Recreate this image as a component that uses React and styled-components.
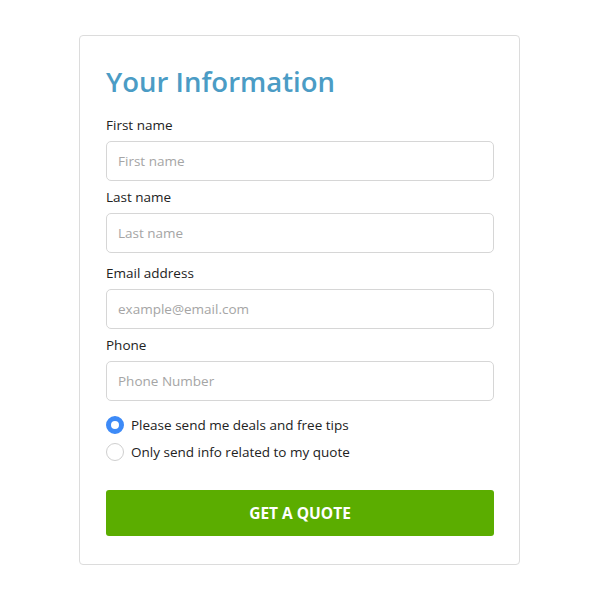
import React from 'react';
import styled, { createGlobalStyle } from 'styled-components';

const GlobalStyle = createGlobalStyle`
  body {
    margin: 0;
    background: #fff;
    font-family: "Open Sans", "Noto Sans", sans-serif;
  }
`;

const Page = styled.div`
  width: 600px;
  height: 600px;
  padding: 35px 0 0 79px;
  box-sizing: border-box;
  display: flex;
`;

const Card = styled.form`
  width: 441px;
  height: 530px;
  box-sizing: border-box;
  border: 1px solid #dcdcdc;
  border-radius: 4px;
  padding: 28px 25px 0 26px;
  display: flex;
  flex-direction: column;
`;

const Title = styled.h1`
  margin: 0 0 15px 0;
  font-size: 27.5px;
  line-height: 36px;
  font-weight: 600;
  color: #4b9cc5;
`;

const Field = styled.div`
  display: flex;
  flex-direction: column;
  margin-top: ${(p) => p.$top || 0}px;
`;

const Label = styled.label`
  font-size: 13.5px;
  line-height: 20px;
  color: #222;
  margin-bottom: 6px;
`;

const Input = styled.input`
  height: 40px;
  box-sizing: border-box;
  border: 1px solid #d6d6d6;
  border-radius: 5px;
  padding: 0 11px;
  font-family: inherit;
  font-size: 13.5px;
  color: #333;
  outline: none;
  &::placeholder {
    color: #a5a5a5;
  }
`;

const Options = styled.div`
  display: flex;
  flex-direction: column;
  gap: 7px;
  margin-top: 14px;
`;

const Option = styled.label`
  display: flex;
  align-items: center;
  gap: 7px;
  font-size: 13.5px;
  line-height: 20px;
  color: #222;
  cursor: pointer;
`;

const Radio = styled.span`
  width: 18px;
  height: 18px;
  box-sizing: border-box;
  border-radius: 50%;
  border: ${(p) => (p.$checked ? '5px solid #3d8af7' : '1px solid #cfcfcf')};
  background: #fff;
  flex-shrink: 0;
`;

const Button = styled.button`
  margin-top: 28px;
  height: 46px;
  border: none;
  border-radius: 3px;
  background: #5bad00;
  color: #fff;
  font-family: inherit;
  font-size: 15.5px;
  font-weight: 700;
  cursor: pointer;
`;

const fields = [
  { label: 'First name', placeholder: 'First name', top: 0 },
  { label: 'Last name', placeholder: 'Last name', top: 6 },
  { label: 'Email address', placeholder: 'example@email.com', top: 10 },
  { label: 'Phone', placeholder: 'Phone Number', top: 6 },
];

export default function App() {
  return (
    <>
      <GlobalStyle />
      <Page>
        <Card onSubmit={(e) => e.preventDefault()}>
          <Title>Your Information</Title>
          {fields.map((f) => (
            <Field key={f.label} $top={f.top}>
              <Label>{f.label}</Label>
              <Input placeholder={f.placeholder} />
            </Field>
          ))}
          <Options>
            <Option>
              <Radio $checked />
              Please send me deals and free tips
            </Option>
            <Option>
              <Radio />
              Only send info related to my quote
            </Option>
          </Options>
          <Button type="submit">GET A QUOTE</Button>
        </Card>
      </Page>
    </>
  );
}
